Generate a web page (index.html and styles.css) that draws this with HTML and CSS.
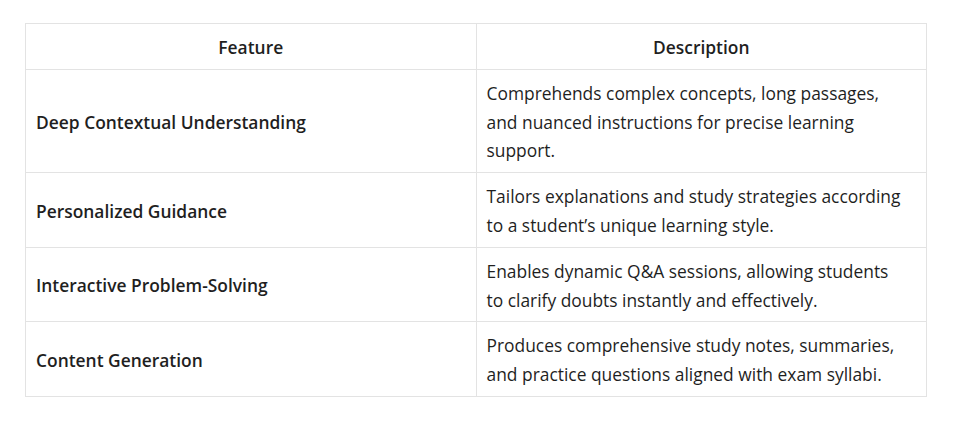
FILE: index.html
```html
<!DOCTYPE html>
<html lang="en">
<head>
<meta charset="utf-8">
<title>Features</title>
<link rel="stylesheet" href="styles.css">
</head>
<body>
<div class="wrap">
  <table class="ft">
    <thead>
      <tr><th>Feature</th><th>Description</th></tr>
    </thead>
    <tbody>
      <tr><td class="name">Deep Contextual Understanding</td><td>Comprehends complex concepts, long passages,<br>and nuanced instructions for precise learning<br>support.</td></tr>
      <tr><td class="name">Personalized Guidance</td><td>Tailors explanations and study strategies according<br>to a student’s unique learning style.</td></tr>
      <tr><td class="name">Interactive Problem-Solving</td><td>Enables dynamic Q&amp;A sessions, allowing students<br>to clarify doubts instantly and effectively.</td></tr>
      <tr><td class="name">Content Generation</td><td>Produces comprehensive study notes, summaries,<br>and practice questions aligned with exam syllabi.</td></tr>
    </tbody>
  </table>
</div>
</body>
</html>
```
FILE: styles.css
```css
html, body { margin: 0; padding: 0; background: #fff; }
body {
  font-family: "Open Sans", "Noto Sans", sans-serif;
  color: #1f1f1f;
}
.wrap { padding: 23px 0 0 25px; }
.ft {
  width: 902px;
  border-collapse: collapse;
  table-layout: fixed;
  font-size: 17.4px;
  line-height: 28.8px;
}
.ft th, .ft td {
  border: 1px solid #e3e3e3;
  padding: 9px 4px 7px 10px;
  vertical-align: middle;
}
.ft th {
  font-weight: 600;
  text-align: center;
  padding-right: 10px;
}
.ft td { text-align: left; }
.ft td.name { font-weight: 600; }
```
